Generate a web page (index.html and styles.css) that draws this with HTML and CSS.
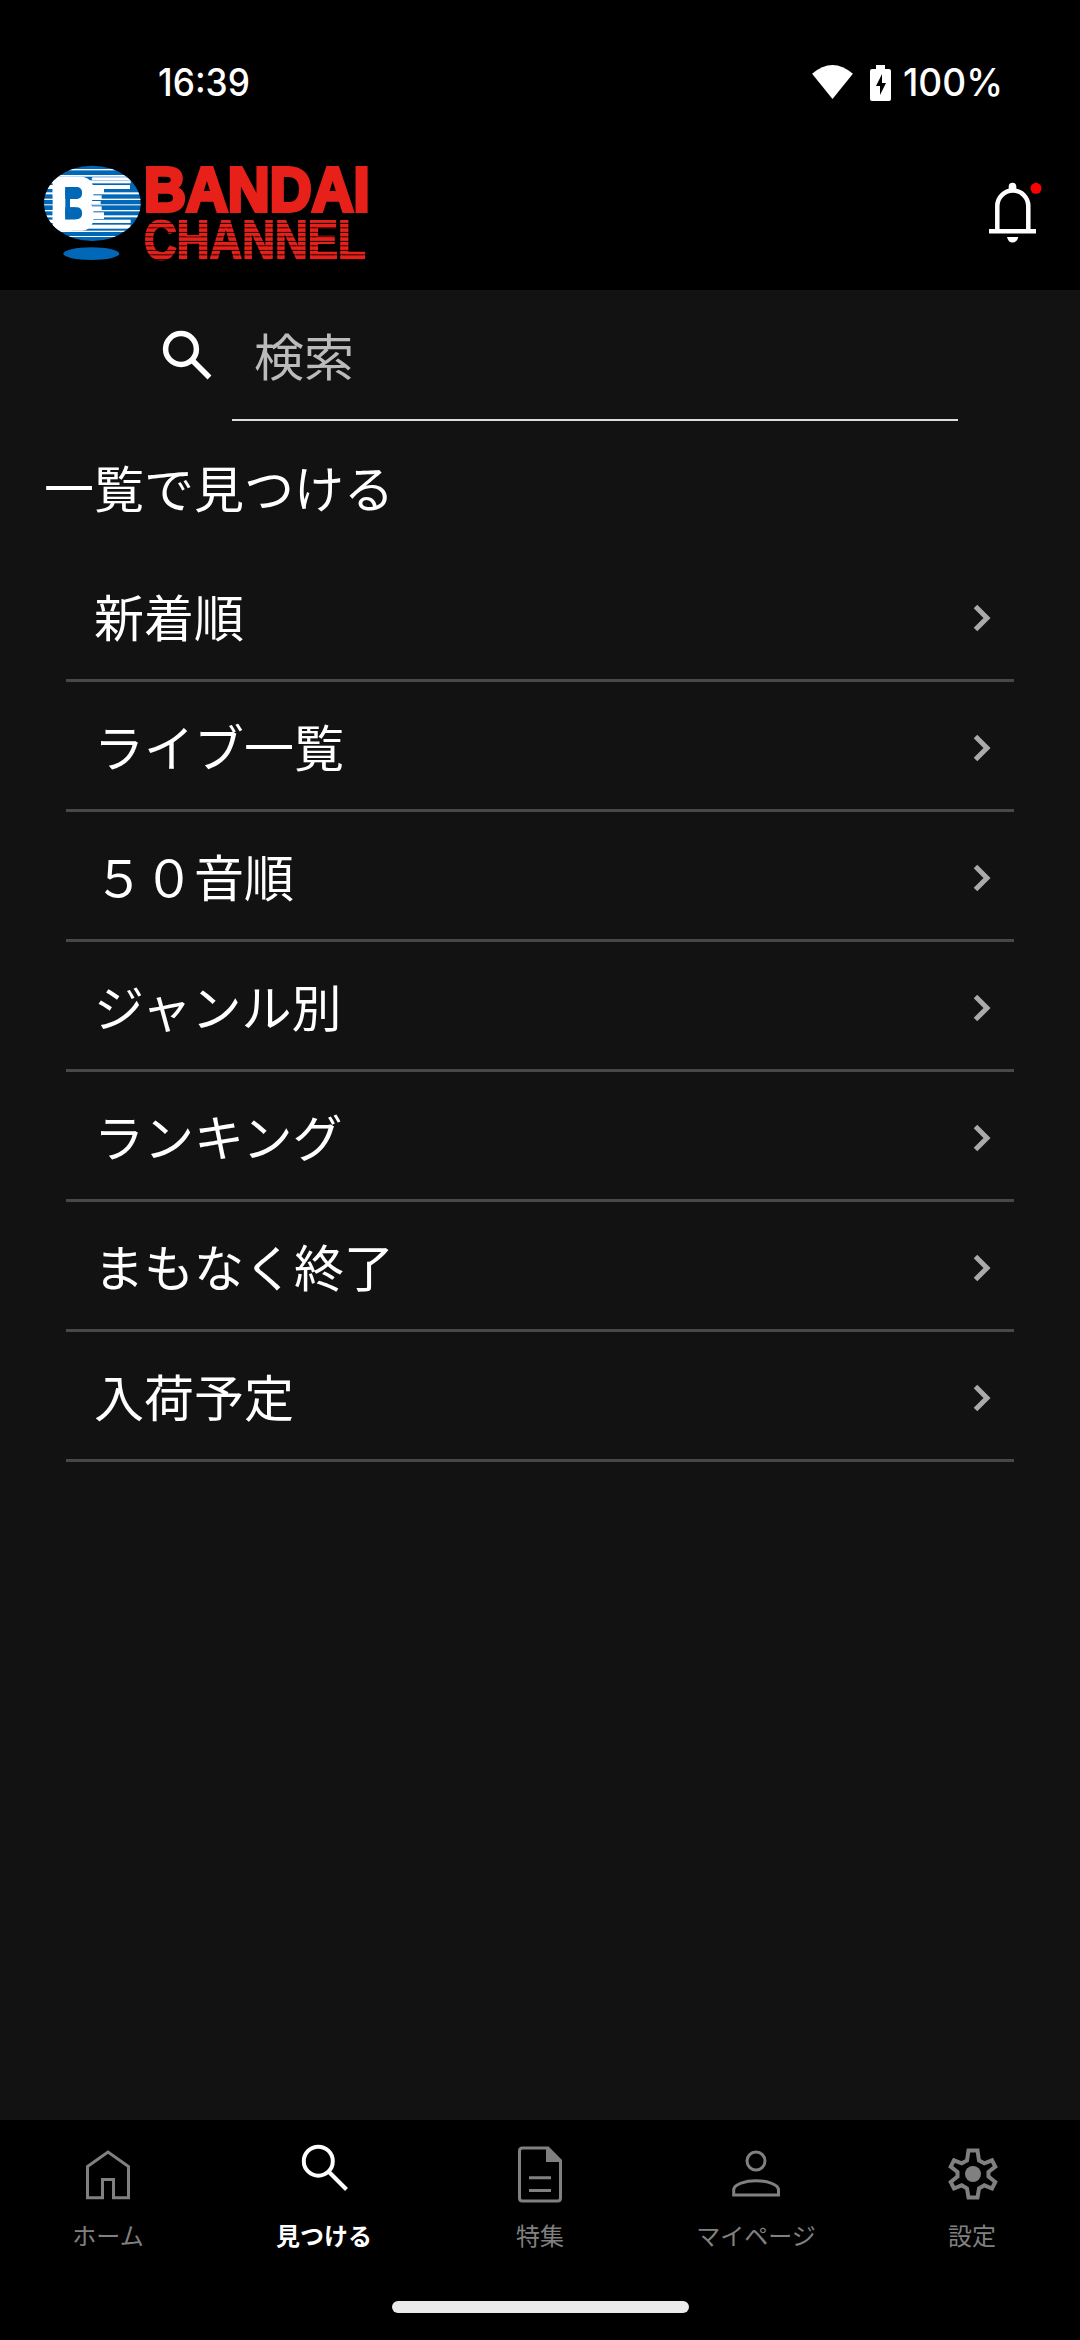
FILE: index.html
```html
<!DOCTYPE html>
<html lang="ja">
<head>
<meta charset="utf-8">
<title>見つける</title>
<link rel="stylesheet" href="styles.css">
</head>
<body>
<div class="app">
  <div class="status">
    <svg class="clock" viewBox="0 0 92 34"><text x="-1" y="31" textLength="92" lengthAdjust="spacingAndGlyphs">16:39</text></svg>
    <div class="status-icons">
      <svg class="wifi" viewBox="0 0 42 36"><path d="M0 9Q21-9 42 9L21 35Z"/></svg>
      <svg class="battery" viewBox="0 0 21 36"><path fill-rule="evenodd" d="M6 0H15V4H19Q21 4 21 6V34Q21 36 19 36H2Q0 36 0 34V6Q0 4 2 4H6ZM12 9L6 21H10V30L16 18H12Z"/></svg>
      <svg class="percent" viewBox="0 0 98 34"><text x="-1" y="31" textLength="100" lengthAdjust="spacingAndGlyphs">100%</text></svg>
    </div>
  </div>

  <header class="header">
    <svg class="logo" viewBox="0 0 1050 375">
      <defs>
        <clipPath id="globe"><ellipse cx="187" cy="160" rx="145" ry="113"/></clipPath>
        <pattern id="lines" width="20" height="13.500" patternUnits="userSpaceOnUse" y="208"><rect width="20" height="10.500" fill="#e7211a"/></pattern>
      </defs>
      <g clip-path="url(#globe)">
        <rect width="350" height="300" fill="#0068b7"/>
        <g fill="#fff">
          <rect y="57" width="350" height="4"/><rect y="75" width="350" height="5"/>
          <rect x="40" y="91" width="262" height="9"/><rect x="40" y="105" width="260" height="12"/>
          <rect x="40" y="127" width="300" height="6"/><rect x="40" y="146" width="300" height="4"/>
          <rect x="40" y="163" width="300" height="3"/><rect x="40" y="180" width="300" height="4"/>
          <rect x="40" y="196" width="300" height="6"/><rect x="40" y="209" width="262" height="10"/>
          <rect x="40" y="224" width="262" height="12"/>
          <rect y="242" width="350" height="4"/><rect y="258" width="350" height="3"/>
          <rect x="68" y="80" width="122" height="92" rx="36"/><rect x="68" y="150" width="122" height="92" rx="36"/><rect x="68" y="80" width="60" height="162" rx="8"/>
          <rect x="185" y="82" width="117" height="8" rx="4"/><rect x="180" y="105" width="42" height="25"/><rect x="174" y="136" width="41" height="12"/><rect x="172" y="153" width="40" height="10"/><rect x="174" y="169" width="41" height="11"/><rect x="180" y="187" width="42" height="20"/>
        </g>
        <g fill="#0068b7"><rect x="106" y="111" width="50" height="36" rx="15"/><rect x="106" y="172" width="50" height="36" rx="15"/><rect x="106" y="111" width="30" height="36"/><rect x="106" y="172" width="30" height="36"/><rect x="106" y="111" width="14" height="97"/></g>
      </g>
      <ellipse cx="184" cy="311" rx="84" ry="19" fill="#0068b7"/>
      <text class="brand" x="342" y="184" textLength="677" lengthAdjust="spacingAndGlyphs">BANDAI</text>
      <text class="channel" x="342" y="326" textLength="665" lengthAdjust="spacingAndGlyphs">CHANNEL</text>
    </svg>
    <svg class="bell" viewBox="0 0 55 60">
      <path d="M8.300 49V24a15.500 15.500 0 0 1 31 0V49M0 49.300H47" fill="none" stroke="#fff" stroke-width="4.500"/>
      <path d="M19.700 9V4.500a3.800 3.800 0 0 1 7.600 0V9ZM18 55H29.300Q28 60.500 23.600 60.500T18 55Z" fill="#fff"/>
      <circle cx="47" cy="6.300" r="5.500" fill="#f00"/>
    </svg>
  </header>

  <main class="main">
    <div class="search">
      <svg class="search-icon" viewBox="0 0 50 50"><circle cx="19" cy="19" r="15.400"/><path d="M31 31L47.500 47.500"/></svg>
      <div class="field">検索</div>
    </div>
    <h1 class="title">一覧で見つける</h1>
    <ul class="list">
      <li class="row"><span>新着順</span><svg class="chevron" viewBox="0 0 18 28"><path d="M2.500 2.500L14 14L2.500 25.500"/></svg></li>
      <li class="row"><span>ライブ一覧</span><svg class="chevron" viewBox="0 0 18 28"><path d="M2.500 2.500L14 14L2.500 25.500"/></svg></li>
      <li class="row"><span>５０音順</span><svg class="chevron" viewBox="0 0 18 28"><path d="M2.500 2.500L14 14L2.500 25.500"/></svg></li>
      <li class="row"><span>ジャンル別</span><svg class="chevron" viewBox="0 0 18 28"><path d="M2.500 2.500L14 14L2.500 25.500"/></svg></li>
      <li class="row"><span>ランキング</span><svg class="chevron" viewBox="0 0 18 28"><path d="M2.500 2.500L14 14L2.500 25.500"/></svg></li>
      <li class="row"><span>まもなく終了</span><svg class="chevron" viewBox="0 0 18 28"><path d="M2.500 2.500L14 14L2.500 25.500"/></svg></li>
      <li class="row"><span>入荷予定</span><svg class="chevron" viewBox="0 0 18 28"><path d="M2.500 2.500L14 14L2.500 25.500"/></svg></li>
    </ul>
  </main>

  <nav class="tabs">
    <div class="tab"><svg viewBox="0 0 60 60"><path d="M9.500 18.500L30 4L50.500 18.500V49.700H35.500V31.500H24.500V49.700H9.500Z"/></svg><span>ホーム</span></div>
    <div class="tab active"><svg viewBox="0 0 60 60"><circle cx="24.300" cy="13.200" r="14.500" stroke-width="4"/><path d="M34.500 23.500L52.500 41.500" stroke-width="4"/></svg><span>見つける</span></div>
    <div class="tab"><svg viewBox="0 0 60 60"><path d="M12.500 0H38L50.500 12.500V50Q50.500 53 47.500 53H12.500Q9.500 53 9.500 50V3Q9.500 0 12.500 0ZM19 29.700H41M19 42.500H41"/><path d="M36 0V14H51V12L38 0Z" class="solid"/></svg><span>特集</span></div>
    <div class="tab"><svg viewBox="0 0 60 60"><circle cx="30" cy="13" r="9"/><path d="M7.700 47V42C7.700 36 20 32.700 30 32.700S52.500 36 52.500 42V47Z"/></svg><span>マイページ</span></div>
    <div class="tab"><svg viewBox="0 0 60 60"><path stroke-width="4" d="M26.500 2.500H35.500L37 12.500L42.300 15.300L50 12.300L53.300 18.700L46.500 24V28.500L53.300 34L50 40.500L42.300 37.300L37 40.500L35.500 49.500H26.500L25 40.500L19.700 37.300L12 40.500L8.700 34L15.500 28.500V24L8.700 18.700L12 12.300L19.700 15.300L25 12.500Z"/><circle cx="31" cy="26" r="8" class="solid"/></svg><span>設定</span></div>
  </nav>
  <div class="gesture"><div class="pill"></div></div>
</div>
</body>
</html>
```

FILE: styles.css
```css
* { box-sizing: border-box; }
body { margin: 0; background: #000; color: #fff; font-family: "Noto Sans CJK JP", sans-serif; }
svg { display: block; overflow: visible; flex: none; }
.app { width: 1080px; height: 2340px; display: flex; flex-direction: column; overflow: hidden; }
.status { height: 150px; padding: 65px 78px 0 159px; display: flex; justify-content: space-between; align-items: flex-start; }
.status text { fill: #fff; font-family: Inter, sans-serif; font-size: 37.5px; font-weight: 500; }
.clock { width: 92px; height: 34px; }
.status-icons { display: flex; align-items: flex-start; }
.wifi { width: 41px; height: 35px; fill: #fff; margin-right: 17px; }
.battery { width: 21px; height: 36px; fill: #fff; margin-right: 13px; }
.percent { width: 98px; height: 34px; }
.header { height: 140px; padding: 0 36px 0 30px; display: flex; justify-content: space-between; }
.logo { width: 350px; height: 125px; }
.brand, .channel { font-family: "Liberation Sans", sans-serif; font-weight: 700; }
.brand { font-size: 189px; fill: #e7211a; stroke: #e7211a; stroke-width: 12px; }
.channel { font-size: 166px; fill: url(#lines); stroke: url(#lines); stroke-width: 6px; }
.bell { width: 55px; height: 60px; margin-top: 32px; }
.main { height: 1830px; background: #121212; display: flex; flex-direction: column; }
.search { height: 131px; padding: 0 122px 0 162px; display: flex; }
.search-icon { width: 50px; height: 50px; margin: 40px 20px 0 0; fill: none; stroke: #fff; stroke-width: 5.5px; }
.field { flex: 1; padding: 27px 0 0 22px; border-bottom: 2px solid #ddd; color: #bbb; font-size: 50px; line-height: 74px; }
.title { margin: 28px 0 0 44px; font-size: 50px; line-height: 74px; font-weight: 400; }
.list { list-style: none; margin: 29px 66px 0; padding: 0; }
.row { height: 130px; display: flex; align-items: center; justify-content: space-between; padding: 4px 23px 0 28px; border-bottom: 3px solid #484848; font-size: 50px; line-height: 74px; }
.row span { margin-bottom: 6px; }
.chevron { width: 18px; height: 28px; fill: none; stroke: #aaa; stroke-width: 5px; }
.tabs { height: 150px; display: grid; grid-template-columns: repeat(5, 1fr); }
.tab { display: flex; flex-direction: column; align-items: center; padding-top: 28px; color: #808080; font-size: 24px; line-height: 36px; font-weight: 400; }
.tab svg { width: 60px; height: 60px; fill: none; stroke: currentColor; stroke-width: 3px; }
.tab span { margin-top: 9px; }
.tab .solid { fill: currentColor; stroke: none; }
.tab.active { color: #fff; font-weight: 700; }
.gesture { height: 70px; display: flex; justify-content: center; padding-top: 31px; }
.pill { width: 297px; height: 12px; border-radius: 6px; background: #ebebeb; }
```
